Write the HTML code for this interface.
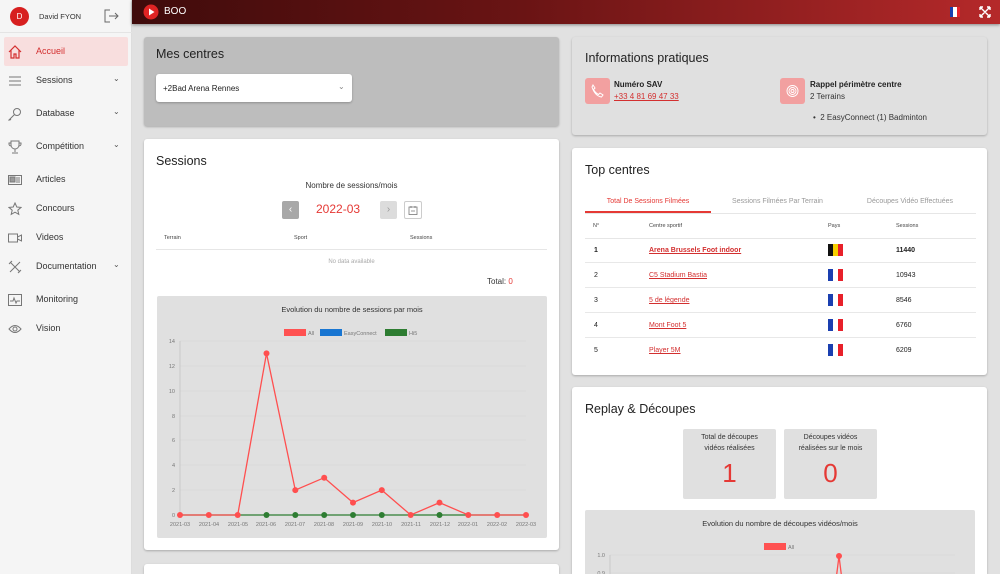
<!DOCTYPE html>
<html><head><meta charset="utf-8"><style>
*{box-sizing:border-box;margin:0;padding:0}
html{width:1000px;height:574px;overflow:hidden}
body{width:1000px;height:574px;overflow:hidden;background:#e1e1e1;font-family:"Liberation Sans",Arial,sans-serif;color:#222;position:relative}
.abs{position:absolute}
#side{left:0;top:0;width:132px;height:574px;background:#f5f5f5;border-right:1px solid #ddd}
.nav{position:absolute;left:0;width:132px;font-size:9px;color:#333}
.nav .ic{position:absolute;left:8px;width:14px;height:14px}
.nav .t{position:absolute;left:36px;top:1px}
.nav .ch{position:absolute;left:113px;font-size:8px;color:#555}
#hdr{left:132px;top:0;width:868px;height:24px;background:linear-gradient(90deg,#3f0b0b,#6a1414 45%,#b5292a);box-shadow:0 1px 3px rgba(0,0,0,.4)}
.card{position:absolute;background:#fff;border-radius:3px;box-shadow:0 1px 2px rgba(0,0,0,.25)}
h2{position:absolute;font-size:12.5px;font-weight:normal;color:#222}
.th{position:absolute;font-size:5.5px;color:#444}
a{color:#d32f2f;text-decoration:underline}
.row{position:absolute;left:585px;width:391px;border-bottom:1px solid #e8e8e8;height:25px;font-size:7px}
.row span{position:absolute;top:9px}
.fl{position:absolute;top:6px;left:243px;width:15px;height:12px;display:flex}
.fl i{flex:1}
</style></head><body>
<div id="side" class="abs"></div>
<div class="abs" style="left:10px;top:7px;width:19px;height:19px;border-radius:50%;background:#d71f1f;color:#fff;font-size:8px;text-align:center;line-height:19px">D</div>
<div class="abs" style="left:39px;top:12px;font-size:7.5px;color:#333">David FYON</div>
<svg class="abs" style="left:104px;top:9px" width="15" height="14" viewBox="0 0 15 14" fill="none" stroke="#666" stroke-width="1"><path d="M6 1H1v12h5M5 7h9M11 4l3 3-3 3"/></svg>
<div class="abs" style="left:0;top:32px;width:132px;border-top:1px solid #e4e4e4"></div>
<div class="abs" style="left:4px;top:37px;width:124px;height:29px;background:#f8dede;border-radius:2px"></div>
<div class="nav" style="top:45px"><svg class="ic" viewBox="0 0 14 14" fill="none" stroke="#d32f2f" stroke-width="1.2"><path d="M1 7L7 1l6 6M3 5v8h3V9h2v4h3V5"/></svg><span class="t" style="color:#d32f2f">Accueil</span></div>
<div class="nav" style="top:74px"><svg class="ic" viewBox="0 0 14 14" stroke="#777"><path d="M1 3h12M1 7h12M1 11h12"/></svg><span class="t">Sessions</span><span class="ch">⌄</span></div>
<div class="nav" style="top:107px"><svg class="ic" viewBox="0 0 14 14" fill="none" stroke="#777"><circle cx="9" cy="5" r="3.5"/><path d="M6.5 7.5L1 13l1 0 1-1"/></svg><span class="t">Database</span><span class="ch">⌄</span></div>
<div class="nav" style="top:140px"><svg class="ic" viewBox="0 0 14 14" fill="none" stroke="#777"><path d="M3 1h8v4a4 4 0 0 1-8 0zM3 3H1v1a2 2 0 0 0 2 2M11 3h2v1a2 2 0 0 1-2 2M7 9v3M4 13h6"/></svg><span class="t">Compétition</span><span class="ch">⌄</span></div>
<div class="nav" style="top:173px"><svg class="ic" viewBox="0 0 14 14" fill="none" stroke="#777"><rect x="0.5" y="2.5" width="13" height="9"/><rect x="2" y="4" width="5" height="5" fill="#999"/><path d="M8 5h4M8 7h4M8 9h4"/></svg><span class="t">Articles</span></div>
<div class="nav" style="top:202px"><svg class="ic" viewBox="0 0 14 14" fill="none" stroke="#777"><path d="M7 1l1.8 4 4.2.4-3.2 2.8 1 4.2L7 10.2 3.2 12.4l1-4.2L1 5.4 5.2 5z"/></svg><span class="t">Concours</span></div>
<div class="nav" style="top:231px"><svg class="ic" viewBox="0 0 14 14" fill="none" stroke="#777"><rect x="0.5" y="3" width="9" height="8"/><path d="M9.5 6l4-2v6l-4-2"/></svg><span class="t">Videos</span></div>
<div class="nav" style="top:260px"><svg class="ic" viewBox="0 0 14 14" fill="none" stroke="#777"><path d="M2 2l10 10M12 2L2 12M1 4l3-3M10 13l3-3"/></svg><span class="t">Documentation</span><span class="ch">⌄</span></div>
<div class="nav" style="top:293px"><svg class="ic" viewBox="0 0 14 14" fill="none" stroke="#777"><rect x="0.5" y="1.5" width="13" height="11"/><path d="M2 8h3l1-3 2 5 1-2h3"/></svg><span class="t">Monitoring</span></div>
<div class="nav" style="top:322px"><svg class="ic" viewBox="0 0 14 14" fill="none" stroke="#777"><path d="M1 7q6-7 12 0q-6 7-12 0z"/><circle cx="7" cy="7" r="2"/></svg><span class="t">Vision</span></div>

<div id="hdr" class="abs"></div>
<svg class="abs" style="left:143px;top:4px" width="16" height="16" viewBox="0 0 16 16"><circle cx="8" cy="8" r="7.5" fill="#e02424"/><path d="M6 4.5v7l5.5-3.5z" fill="#fff"/></svg>
<div class="abs" style="left:164px;top:6px;color:#fff;font-size:10px">BOO</div>
<div class="abs" style="left:950px;top:7px;width:10px;height:10px;display:flex"><i style="flex:1;background:#1a3fb0"></i><i style="flex:1;background:#fff"></i><i style="flex:1;background:#e8202a"></i></div>
<svg class="abs" style="left:979px;top:6px" width="12" height="12" viewBox="0 0 12 12" stroke="#fff" stroke-width="1.4" fill="none"><path d="M1 1l10 10M11 1L1 11M1 1h3M1 1v3M11 1h-3M11 1v3M1 11h3M1 11v-3M11 11h-3M11 11v-3"/></svg>

<div class="card" style="left:144px;top:37px;width:415px;height:89px;background:#bdbdbd"></div>
<h2 style="left:156px;top:47px">Mes centres</h2>
<div class="card" style="left:156px;top:74px;width:196px;height:28px"></div>
<div class="abs" style="left:163px;top:84px;font-size:8px">+2Bad Arena Rennes</div>
<div class="abs" style="left:338px;top:82px;font-size:8px;color:#888">⌄</div>

<div class="card" style="left:144px;top:139px;width:415px;height:411px"></div>
<h2 style="left:156px;top:154px">Sessions</h2>
<div class="abs" style="left:144px;top:181px;width:415px;text-align:center;font-size:8px;color:#333">Nombre de sessions/mois</div>
<div class="abs" style="left:282px;top:201px;width:17px;height:18px;background:#a8a8a8;border-radius:2px;color:#fff;font-size:10px;text-align:center;line-height:18px">‹</div>
<div class="abs" style="left:316px;top:202px;font-size:12px;color:#e53935">2022-03</div>
<div class="abs" style="left:380px;top:201px;width:17px;height:18px;background:#dcdcdc;border-radius:2px;color:#999;font-size:10px;text-align:center;line-height:18px">›</div>
<div class="abs" style="left:404px;top:201px;width:18px;height:18px;border:1px solid #ccc;border-radius:2px"></div>
<svg class="abs" style="left:408px;top:205px" width="10" height="10" viewBox="0 0 10 10" fill="none" stroke="#777" stroke-width=".8"><rect x="1" y="2" width="8" height="7.5"/><path d="M3 1v2M7 1v2M3 6h4"/></svg>
<div class="th" style="left:164px;top:235px">Terrain</div>
<div class="th" style="left:294px;top:235px">Sport</div>
<div class="th" style="left:410px;top:235px">Sessions</div>
<div class="abs" style="left:156px;top:249px;width:391px;border-top:1px solid #e6e6e6"></div>
<div class="abs" style="left:144px;top:259px;width:415px;text-align:center;font-size:6px;color:#aaa">No data available</div>
<div class="abs" style="left:487px;top:277px;font-size:8px;color:#333">Total: <span style="color:#e53935">0</span></div>
<div class="abs" style="left:157px;top:296px;width:390px;height:242px;background:#e0e0e0;border-radius:2px"></div>
<div class="abs" style="left:157px;top:305px;width:390px;text-align:center;font-size:7.5px;color:#333">Evolution du nombre de sessions par mois</div>
<svg class="abs" style="left:0;top:0" width="1000" height="574">
<g font-size="5.5" fill="#777" font-family="Liberation Sans">
<rect x="284" y="329" width="22" height="7" fill="#ff5252"/><text x="308" y="335">All</text>
<rect x="320" y="329" width="22" height="7" fill="#1976d2"/><text x="344" y="335">EasyConnect</text>
<rect x="385" y="329" width="22" height="7" fill="#2e7d32"/><text x="409" y="335">Hi5</text>
<g stroke="#d4d4d4" stroke-width=".6"><path d="M180 341H526M180 366H526M180 391H526M180 416H526M180 440H526M180 465H526M180 490H526"/></g>
<path d="M180 341V516" stroke="#c4c4c4" stroke-width=".8"/>
<g text-anchor="end"><text x="175" y="343">14</text><text x="175" y="368">12</text><text x="175" y="393">10</text><text x="175" y="418">8</text><text x="175" y="442">6</text><text x="175" y="467">4</text><text x="175" y="492">2</text><text x="175" y="517">0</text></g>
<g text-anchor="middle"><text x="180" y="526">2021-03</text><text x="209" y="526">2021-04</text><text x="238" y="526">2021-05</text><text x="266" y="526">2021-06</text><text x="295" y="526">2021-07</text><text x="324" y="526">2021-08</text><text x="353" y="526">2021-09</text><text x="382" y="526">2021-10</text><text x="411" y="526">2021-11</text><text x="440" y="526">2021-12</text><text x="468" y="526">2022-01</text><text x="497" y="526">2022-02</text><text x="526" y="526">2022-03</text></g>
</g>
<path d="M180 515H526" stroke="#2e7d32" stroke-width="1.3"/>
<g fill="#2e7d32"><circle cx="266.5" cy="515" r="3"/><circle cx="295.3" cy="515" r="3"/><circle cx="324.2" cy="515" r="3"/><circle cx="353" cy="515" r="3"/><circle cx="381.8" cy="515" r="3"/><circle cx="439.5" cy="515" r="3"/></g>
<polyline fill="none" stroke="#ff4f4f" stroke-width="1.3" points="180,515 208.8,515 237.7,515 266.5,353.4 295.3,490.1 324.2,477.7 353,502.6 381.8,490.1 410.7,515 439.5,502.6 468.3,515 497.2,515 526,515"/>
<g fill="#ff4f4f"><circle cx="180" cy="515" r="3"/><circle cx="208.8" cy="515" r="3"/><circle cx="237.7" cy="515" r="3"/><circle cx="266.5" cy="353.4" r="3"/><circle cx="295.3" cy="490.1" r="3"/><circle cx="324.2" cy="477.7" r="3"/><circle cx="353" cy="502.6" r="3"/><circle cx="381.8" cy="490.1" r="3"/><circle cx="410.7" cy="515" r="3"/><circle cx="439.5" cy="502.6" r="3"/><circle cx="468.3" cy="515" r="3"/><circle cx="497.2" cy="515" r="3"/><circle cx="526" cy="515" r="3"/></g>
</svg>
<div class="card" style="left:144px;top:564px;width:415px;height:10px;border-radius:3px 3px 0 0"></div>

<div class="card" style="left:572px;top:37px;width:415px;height:98px;background:#e0e0e0"></div>
<h2 style="left:585px;top:51px">Informations pratiques</h2>
<div class="abs" style="left:585px;top:78px;width:25px;height:26px;background:#f2a0a0;border-radius:3px"></div>
<svg class="abs" style="left:590px;top:84px" width="15" height="14" viewBox="0 0 15 14" fill="none" stroke="#fff" stroke-width="1"><path d="M3 1l2 3-1.5 1.5q2 3.5 5 5L10 9l3 2-1.5 2Q5 12 2 3z"/></svg>
<div class="abs" style="left:614px;top:80px;font-size:8px;font-weight:bold">Numéro SAV</div>
<div class="abs" style="left:614px;top:92px;font-size:8px"><a>+33 4 81 69 47 33</a></div>
<div class="abs" style="left:780px;top:78px;width:25px;height:26px;background:#f2a0a0;border-radius:3px"></div>
<svg class="abs" style="left:785px;top:84px" width="15" height="14" viewBox="0 0 15 14" fill="none" stroke="#fff" stroke-width=".9"><circle cx="7.5" cy="7" r="5.5"/><circle cx="7.5" cy="7" r="3.5"/><circle cx="7.5" cy="7" r="1.5"/></svg>
<div class="abs" style="left:810px;top:80px;font-size:8px;font-weight:bold">Rappel périmètre centre</div>
<div class="abs" style="left:810px;top:92px;font-size:8px;color:#333">2 Terrains</div>
<div class="abs" style="left:813px;top:113px;font-size:8px;color:#333">•&nbsp; 2 EasyConnect (1) Badminton</div>

<div class="card" style="left:572px;top:148px;width:415px;height:227px"></div>
<h2 style="left:585px;top:163px">Top centres</h2>
<div class="abs" style="left:585px;top:198px;width:126px;text-align:center;font-size:7px;color:#e53935">Total De Sessions Filmées</div>
<div class="abs" style="left:711px;top:198px;width:133px;text-align:center;font-size:7px;color:#999">Sessions Filmées Par Terrain</div>
<div class="abs" style="left:844px;top:198px;width:132px;text-align:center;font-size:7px;color:#999">Découpes Vidéo Effectuées</div>
<div class="abs" style="left:585px;top:213px;width:391px;border-top:1px solid #e6e6e6"></div>
<div class="abs" style="left:585px;top:211px;width:126px;height:2px;background:#e53935"></div>
<div class="th" style="left:593px;top:223px">N°</div>
<div class="th" style="left:649px;top:223px">Centre sportif</div>
<div class="th" style="left:828px;top:223px">Pays</div>
<div class="th" style="left:896px;top:223px">Sessions</div>
<div class="abs" style="left:585px;top:238px;width:391px;border-top:1px solid #e6e6e6"></div>
<div class="row" style="top:238px;font-weight:bold"><span style="left:9px">1</span><span style="left:64px"><a>Arena Brussels Foot indoor</a></span><div class="fl"><i style="background:#111"></i><i style="background:#f5d000"></i><i style="background:#e8202a"></i></div><span style="left:311px">11440</span></div>
<div class="row" style="top:263px"><span style="left:9px">2</span><span style="left:64px"><a>C5 Stadium Bastia</a></span><div class="fl"><i style="background:#1a3fb0"></i><i style="background:#fff"></i><i style="background:#e8202a"></i></div><span style="left:311px">10943</span></div>
<div class="row" style="top:288px"><span style="left:9px">3</span><span style="left:64px"><a>5 de légende</a></span><div class="fl"><i style="background:#1a3fb0"></i><i style="background:#fff"></i><i style="background:#e8202a"></i></div><span style="left:311px">8546</span></div>
<div class="row" style="top:313px"><span style="left:9px">4</span><span style="left:64px"><a>Mont Foot 5</a></span><div class="fl"><i style="background:#1a3fb0"></i><i style="background:#fff"></i><i style="background:#e8202a"></i></div><span style="left:311px">6760</span></div>
<div class="row" style="top:338px;border:none"><span style="left:9px">5</span><span style="left:64px"><a>Player 5M</a></span><div class="fl"><i style="background:#1a3fb0"></i><i style="background:#fff"></i><i style="background:#e8202a"></i></div><span style="left:311px">6209</span></div>

<div class="card" style="left:572px;top:387px;width:415px;height:187px;border-radius:3px 3px 0 0"></div>
<h2 style="left:585px;top:402px">Replay &amp; Découpes</h2>
<div class="abs" style="left:683px;top:429px;width:93px;height:70px;background:#e0e0e0;border-radius:2px;text-align:center;font-size:7px;color:#333;padding-top:4px;line-height:10.5px">Total de découpes<br>vidéos réalisées<div style="font-size:26px;color:#e53935;line-height:30px;margin-top:4px">1</div></div>
<div class="abs" style="left:784px;top:429px;width:93px;height:70px;background:#e0e0e0;border-radius:2px;text-align:center;font-size:7px;color:#333;padding-top:4px;line-height:10.5px">Découpes vidéos<br>réalisées sur le mois<div style="font-size:26px;color:#e53935;line-height:30px;margin-top:4px">0</div></div>
<div class="abs" style="left:585px;top:510px;width:390px;height:64px;background:#e0e0e0;border-radius:2px 2px 0 0"></div>
<div class="abs" style="left:585px;top:519px;width:390px;text-align:center;font-size:7.5px;color:#333">Evolution du nombre de découpes vidéos/mois</div>
<svg class="abs" style="left:0;top:0" width="1000" height="574">
<rect x="764" y="543" width="22" height="7" fill="#ff5252"/><text x="788" y="549" font-size="5.5" fill="#777" font-family="Liberation Sans">All</text>
<path d="M610 555H955M610 573H955" stroke="#d4d4d4" stroke-width=".6"/><path d="M610 555V574" stroke="#c4c4c4" stroke-width=".8"/>
<text x="605" y="557" font-size="5.5" fill="#777" text-anchor="end" font-family="Liberation Sans">1.0</text><text x="605" y="575" font-size="5.5" fill="#777" text-anchor="end" font-family="Liberation Sans">0.9</text>
<path d="M836 580L839 556L842 580" fill="none" stroke="#ff4f4f" stroke-width="1.3"/><circle cx="839" cy="556" r="3" fill="#ff4f4f"/>
</svg>
</body></html>
